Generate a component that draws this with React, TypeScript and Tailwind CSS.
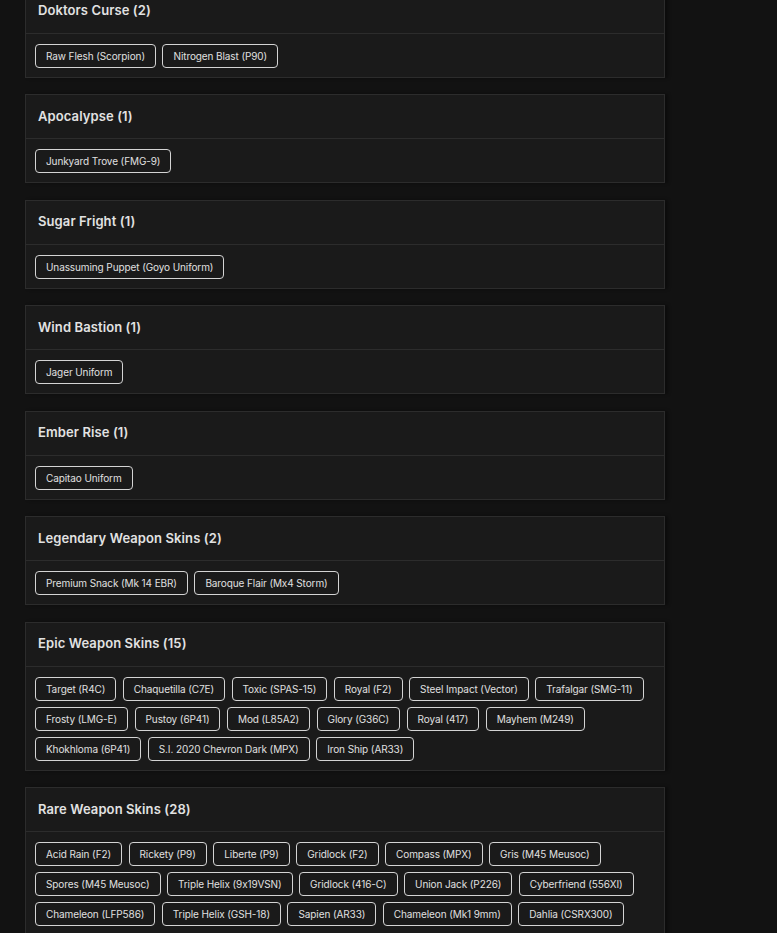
import React from "react";

type Section = { title: string; items: string[] };

const sections: Section[] = [
  { title: "Doktors Curse (2)", items: ["Raw Flesh (Scorpion)", "Nitrogen Blast (P90)"] },
  { title: "Apocalypse (1)", items: ["Junkyard Trove (FMG-9)"] },
  { title: "Sugar Fright (1)", items: ["Unassuming Puppet (Goyo Uniform)"] },
  { title: "Wind Bastion (1)", items: ["Jager Uniform"] },
  { title: "Ember Rise (1)", items: ["Capitao Uniform"] },
  { title: "Legendary Weapon Skins (2)", items: ["Premium Snack (Mk 14 EBR)", "Baroque Flair (Mx4 Storm)"] },
  {
    title: "Epic Weapon Skins (15)",
    items: [
      "Target (R4C)",
      "Chaquetilla (C7E)",
      "Toxic (SPAS-15)",
      "Royal (F2)",
      "Steel Impact (Vector)",
      "Trafalgar (SMG-11)",
      "Frosty (LMG-E)",
      "Pustoy (6P41)",
      "Mod (L85A2)",
      "Glory (G36C)",
      "Royal (417)",
      "Mayhem (M249)",
      "Khokhloma (6P41)",
      "S.I. 2020 Chevron Dark (MPX)",
      "Iron Ship (AR33)",
    ],
  },
  {
    title: "Rare Weapon Skins (28)",
    items: [
      "Acid Rain (F2)",
      "Rickety (P9)",
      "Liberte (P9)",
      "Gridlock (F2)",
      "Compass (MPX)",
      "Gris (M45 Meusoc)",
      "Spores (M45 Meusoc)",
      "Triple Helix (9x19VSN)",
      "Gridlock (416-C)",
      "Union Jack (P226)",
      "Cyberfriend (556XI)",
      "Chameleon (LFP586)",
      "Triple Helix (GSH-18)",
      "Sapien (AR33)",
      "Chameleon (Mk1 9mm)",
      "Dahlia (CSRX300)",
    ],
  },
];

function Card({ s }: { s: Section }) {
  return (
    <div className="w-[640px] border border-[#2c2c2c] bg-[#1a1a1a] shadow-[3px_0_3px_rgba(0,0,0,0.35)]">
      <div className="h-[44px] flex items-center pl-[12px] border-b border-[#2c2c2c]">
        <h3 className="text-[13px] font-semibold text-[#e2e2e2] tracking-[0.1px]">{s.title}</h3>
      </div>
      <div className="flex flex-wrap gap-x-[6.5px] gap-y-[6px] pl-[9px] pr-[9px] pt-[10px] pb-[9px]">
        {s.items.map((it) => (
          <span
            key={it}
            className="h-[24px] flex items-center px-[10px] border border-[#d4d4d4] rounded-[4px] text-[10px] text-[#e0e0e0] leading-none tracking-[-0.1px]"
          >
            {it}
          </span>
        ))}
      </div>
    </div>
  );
}

export default function App() {
  return (
    <div
      className="min-h-screen bg-[#121212] overflow-hidden [font-feature-settings:'calt'_0]"
      style={{ fontFamily: "Inter, 'Noto Sans', sans-serif" }}
    >
      <div className="flex flex-col gap-[16.5px] pl-[25px] mt-[-11.5px]">
        {sections.map((s) => (
          <Card key={s.title} s={s} />
        ))}
      </div>
    </div>
  );
}
